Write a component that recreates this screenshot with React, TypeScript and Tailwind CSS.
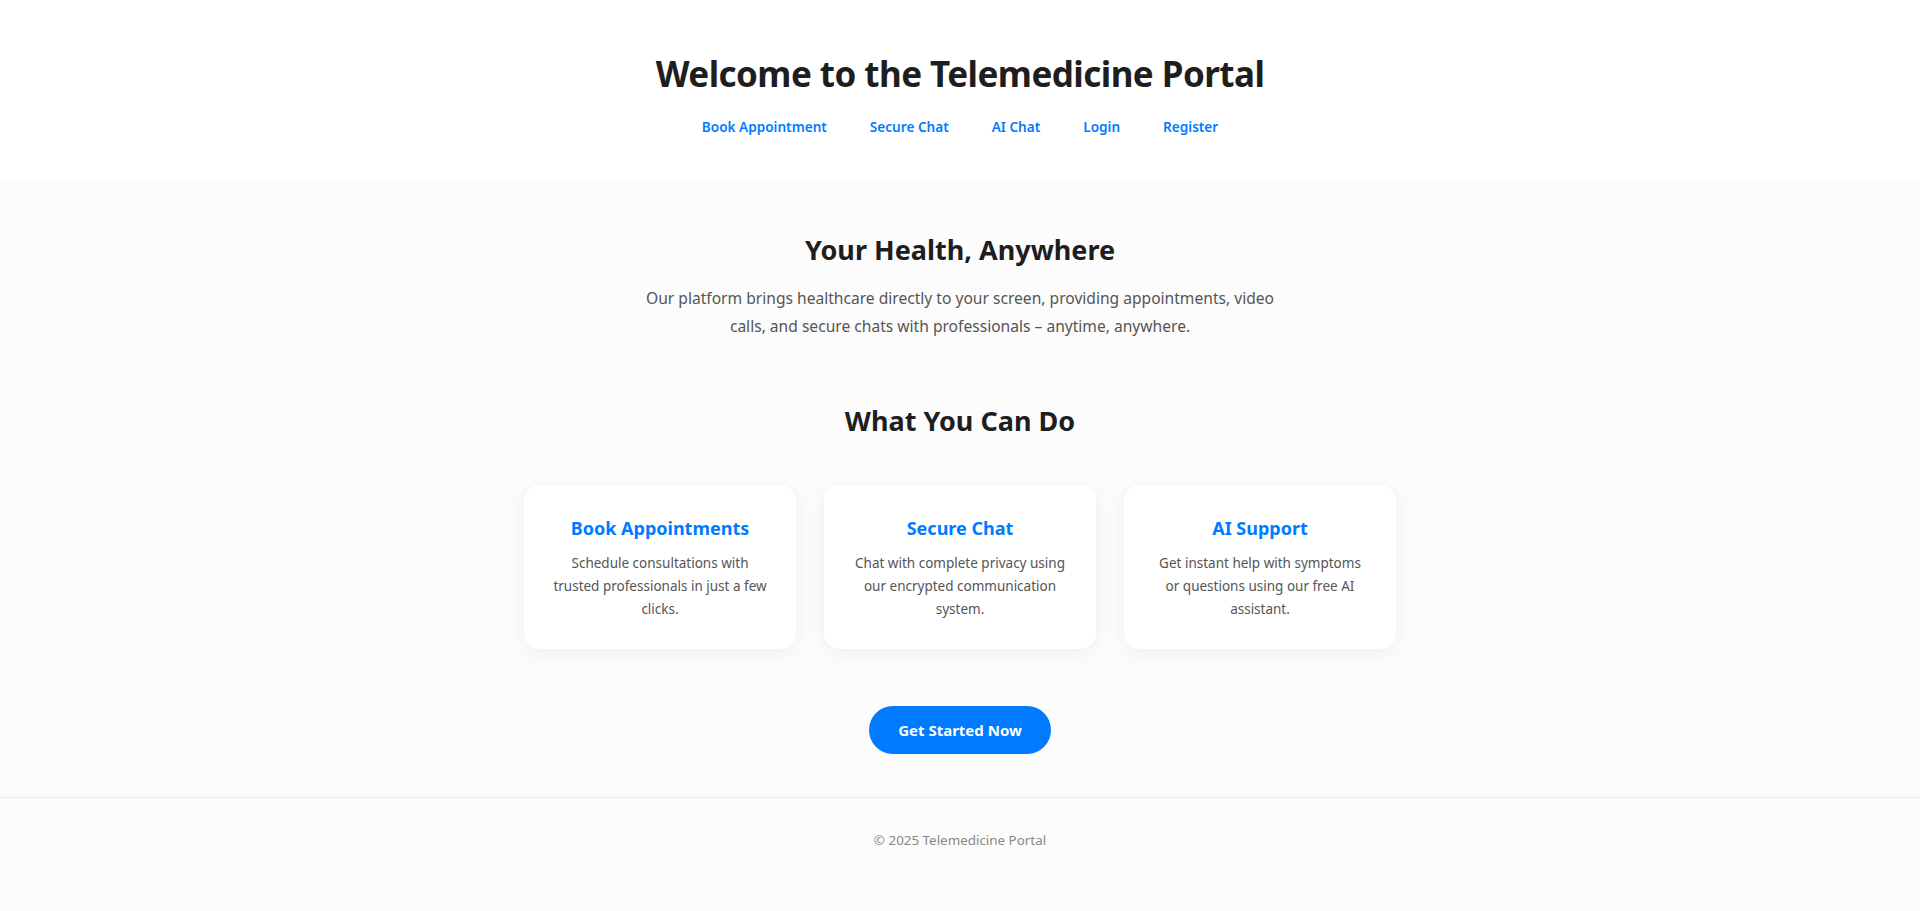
import React from "react";

const font = { fontFamily: '"Segoe UI", "Noto Sans", "Open Sans", sans-serif' };

const features = [
  {
    title: "Book Appointments",
    text: "Schedule consultations with trusted professionals in just a few clicks.",
  },
  {
    title: "Secure Chat",
    text: "Chat with complete privacy using our encrypted communication system.",
  },
  {
    title: "AI Support",
    text: "Get instant help with symptoms or questions using our free AI assistant.",
  },
];

export default function App() {
  return (
    <div className="min-h-screen flex flex-col bg-[#fcfcfc] text-[#222]" style={font}>
      <header className="bg-white flex flex-col items-center pt-[52px] pb-[45px]">
        <h1 className="text-[35px] leading-[43px] font-bold text-[#1e1e1e] tracking-[-0.55px]">
          Welcome to the Telemedicine Portal
        </h1>
        <nav className="mt-[21px] flex items-center gap-[43px]">
          {["Book Appointment", "Secure Chat", "AI Chat", "Login", "Register"].map((l) => (
            <a key={l} href="#" className="text-[13.6px] leading-[21px] font-semibold text-[#007bff]">
              {l}
            </a>
          ))}
        </nav>
      </header>

      <main className="flex flex-col items-center pt-[50px] pb-[43px]">
        <h2 className="text-[27px] leading-[35px] font-bold text-[#1e1e1e]">Your Health, Anywhere</h2>
        <p className="mt-[17px] max-w-[660px] text-center text-[15.6px] leading-[28px] text-[#555]">
          Our platform brings healthcare directly to your screen, providing appointments, video calls, and
          secure chats with professionals – anytime, anywhere.
        </p>

        <h2 className="mt-[63px] text-[27px] leading-[35px] font-bold text-[#1e1e1e]">What You Can Do</h2>

        <div className="mt-[47px] flex gap-[28px]">
          {features.map((f) => (
            <div
              key={f.title}
              className="w-[272px] h-[164px] bg-white rounded-[16px] px-[28px] pt-[28px] text-center shadow-[0_4px_22px_rgba(0,0,0,0.06)]"
            >
              <h3 className="text-[18px] leading-[30px] font-bold text-[#007bff]">{f.title}</h3>
              <p className="mt-[9px] text-[13.5px] leading-[23px] text-[#555]">{f.text}</p>
            </div>
          ))}
        </div>

        <button className="mt-[57px] h-[48px] w-[182px] rounded-full bg-[#007bff] text-white text-[15px] font-bold">
          Get Started Now
        </button>
      </main>

      <footer className="flex-1 border-t border-[#ececec] pt-[32px] pb-[60px] text-center">
        <p className="text-[13.4px] leading-[21px] text-[#888]">© 2025 Telemedicine Portal</p>
      </footer>
    </div>
  );
}
